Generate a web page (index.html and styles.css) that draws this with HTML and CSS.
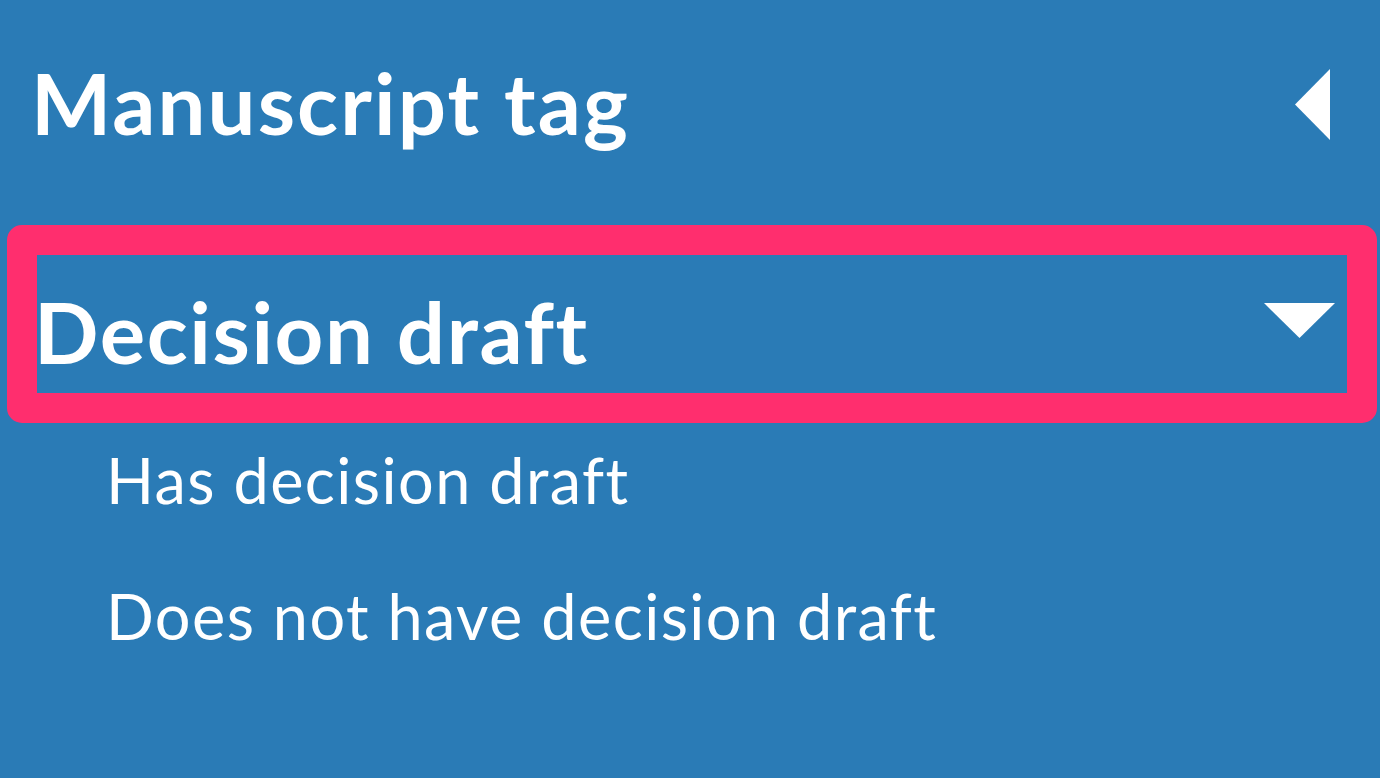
FILE: index.html
```html
<!DOCTYPE html>
<html lang="en">
<head>
<meta charset="utf-8">
<title>Manuscript tag</title>
<link rel="stylesheet" href="styles.css">
</head>
<body>
<div class="panel">
  <div class="panel-header">
    <h1 class="panel-title">Manuscript tag</h1>
    <svg class="caret-left" width="35" height="71" viewBox="0 0 35 71"><polygon points="35,0 35,71 0,35.5" fill="#fff"/></svg>
  </div>
  <div class="group">
    <div class="group-header">
      <h2 class="group-title">Decision draft</h2>
      <svg class="caret-down" width="71" height="35" viewBox="0 0 71 35"><polygon points="0,0 71,0 35.5,35" fill="#fff"/></svg>
    </div>
  </div>
  <ul class="options">
    <li class="option">Has decision draft</li>
    <li class="option">Does not have decision draft</li>
  </ul>
</div>
</body>
</html>
```

FILE: styles.css
```css
html, body {
  margin: 0;
  padding: 0;
  height: 100%;
}
body {
  background: #2a7bb6;
  color: #ffffff;
  font-family: "Lato", "Noto Sans", sans-serif;
  font-variant-ligatures: none;
  overflow: hidden;
}
.panel {
  width: 1380px;
  height: 778px;
}
.panel-header {
  display: flex;
  align-items: flex-start;
  justify-content: space-between;
  padding: 52px 50px 0 31px;
}
.panel-title {
  margin: 0;
  font-size: 85px;
  font-weight: 700;
  line-height: 100px;
  letter-spacing: 2.1px;
}
.caret-left {
  display: block;
  margin-top: 17px;
}
.group {
  margin: 73px 3px 0 7px;
  border: 30px solid #ff2e6e;
  border-radius: 15px;
}
.group-header {
  display: flex;
  align-items: flex-start;
  justify-content: space-between;
  height: 138px;
  box-sizing: border-box;
  padding: 14px 12px 0 0;
}
.group-title {
  margin: 0 0 0 -3px;
  font-size: 85px;
  font-weight: 700;
  line-height: 124px;
  letter-spacing: 1.6px;
}
.caret-down {
  display: block;
  margin-top: 34px;
}
.options {
  list-style: none;
  margin: 7px 0 0 0;
  padding: 0 0 0 106px;
  display: flex;
  flex-direction: column;
  gap: 36px;
}
.option {
  font-size: 63px;
  font-weight: 400;
  line-height: 100px;
  letter-spacing: 1.4px;
}
```
